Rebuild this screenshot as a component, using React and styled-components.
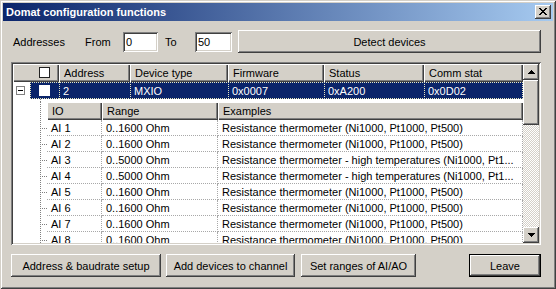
import React from "react";
import styled, { createGlobalStyle } from "styled-components";

const face = "#d4d0c8";
const raised = `inset -1px -1px #404040, inset 1px 1px #fff, inset -2px -2px #808080, inset 2px 2px ${face}`;
const sunken = `inset 1px 1px #808080, inset -1px -1px #fff, inset 2px 2px #404040, inset -2px -2px ${face}`;

const GlobalStyle = createGlobalStyle`
  html, body { margin: 0; padding: 0; background: ${face}; }
  body {
    font-family: "Liberation Sans", Arial, sans-serif;
    font-size: 11px;
    color: #000;
  }
  * { box-sizing: border-box; }
`;

const Window = styled.div`
  width: 556px;
  height: 289px;
  padding: 3px;
  background: ${face};
  box-shadow: inset 1px 1px ${face}, inset -1px -1px #404040, inset 2px 2px #fff,
    inset -2px -2px #808080;
  display: flex;
  flex-direction: column;
`;

const TitleBar = styled.div`
  flex: none;
  height: 18px;
  display: flex;
  align-items: center;
  justify-content: space-between;
  padding: 0 2px 0 3px;
  background: linear-gradient(to right, #0a246a, #a6caf0);
  color: #fff;
  font-weight: bold;
  font-size: 11px;
`;

const CloseButton = styled.div`
  width: 16px;
  height: 14px;
  background: ${face};
  box-shadow: ${raised};
  display: flex;
  align-items: center;
  justify-content: center;
  padding-bottom: 1px;
`;

const Body = styled.div`
  flex: 1;
  display: flex;
  flex-direction: column;
  gap: 9px;
  padding: 9px 12px 9px 8px;
`;

const TopRow = styled.div`
  height: 23px;
  flex: none;
  display: flex;
  align-items: center;
`;

const Label = styled.span`
  width: ${(p) => p.$w}px;
  padding-left: ${(p) => p.$pl || 0}px;
  margin-left: ${(p) => p.$ml || 0}px;
  flex: none;
  white-space: nowrap;
`;

const TextInput = styled.input`
  width: ${(p) => p.$w}px;
  height: 20px;
  flex: none;
  border: none;
  outline: none;
  background: #fff;
  box-shadow: ${sunken};
  font: 11px "Liberation Sans", Arial, sans-serif;
  padding: 1px 3px 0;
`;

const Button = styled.button`
  width: ${(p) => (p.$w ? `${p.$w}px` : "auto")};
  flex: ${(p) => (p.$grow ? 1 : "none")};
  height: ${(p) => p.$h || 23}px;
  margin-left: ${(p) => (p.$auto ? "auto" : `${p.$ml || 0}px`)};
  border: ${(p) => (p.$default ? "1px solid #000" : "none")};
  background: ${face};
  box-shadow: ${raised};
  font: 11px "Liberation Sans", Arial, sans-serif;
  color: #000;
  padding: 0;
  white-space: nowrap;
`;

const Grid = styled.div`
  height: 183px;
  flex: none;
  padding: 2px;
  box-shadow: ${sunken};
  display: flex;
`;

const ListArea = styled.div`
  flex: 1;
  background: #fff;
  overflow: hidden;
  display: flex;
  flex-direction: column;
`;

const HeaderRow = styled.div`
  height: 18px;
  flex: none;
  display: flex;
`;

const HeaderCell = styled.div`
  width: ${(p) => p.$w}px;
  flex: none;
  background: ${face};
  box-shadow: inset 1px 1px #fff, inset -1px -1px #404040, inset -2px -2px #808080;
  padding-left: ${(p) => (p.$pl != null ? p.$pl : 5)}px;
  padding-bottom: 1px;
  display: flex;
  align-items: center;
  white-space: nowrap;
`;

const Check = styled.span`
  width: 11px;
  height: 11px;
  background: #fff;
  border: 1px solid ${(p) => (p.$onDark ? "#fff" : "#222")};
  display: block;
`;

const SelectedRow = styled.div`
  height: 17px;
  flex: none;
  display: flex;
`;

const LeadCell = styled.div`
  width: 17px;
  flex: none;
  padding-left: 3px;
  display: flex;
  align-items: center;
`;

const ExpandBox = styled.span`
  width: 9px;
  height: 9px;
  border: 1px solid #808080;
  display: flex;
  align-items: center;
  justify-content: center;
  &::before {
    content: "";
    width: 5px;
    height: 1px;
    background: #000;
  }
`;

const SelectedBand = styled.div`
  flex: 1;
  display: flex;
  background: #0a246a;
  color: #fff;
  outline: 1px dotted #e8e8c0;
  outline-offset: -1px;
`;

const SelCell = styled.div`
  width: ${(p) => p.$w}px;
  flex: none;
  padding-left: ${(p) => (p.$pl != null ? p.$pl : 3)}px;
  border-left: ${(p) => (p.$first ? "none" : "1px dotted #e8e8c0")};
  display: flex;
  align-items: center;
  white-space: nowrap;
`;

const treeLine = `repeating-linear-gradient(to bottom, #808080 0 1px, transparent 1px 2px) 27px 0 / 1px 100% no-repeat`;
const branchLine = `repeating-linear-gradient(to right, #808080 0 1px, transparent 1px 2px) 27px 50% / 7px 1px no-repeat`;

const Gutter = styled.div`
  width: 34px;
  flex: none;
  background: ${(p) => (p.$branch ? `${branchLine}, ${treeLine}` : treeLine)};
`;

const Spacer = styled.div`
  height: 3px;
  flex: none;
  display: flex;
`;

const NestedRow = styled.div`
  height: 16px;
  flex: none;
  display: flex;
`;

const NestedCell = styled.div`
  width: ${(p) => p.$w}px;
  flex: none;
  padding-left: 4px;
  border-bottom: 1px dotted #a8a8a8;
  border-right: 1px dotted #a8a8a8;
  display: flex;
  align-items: center;
  white-space: nowrap;
  overflow: hidden;
`;

const ScrollBar = styled.div`
  width: 16px;
  flex: none;
  display: flex;
  flex-direction: column;
`;

const ScrollButton = styled.div`
  height: ${(p) => p.$h || 16}px;
  flex: none;
  background: ${face};
  box-shadow: ${raised};
  display: flex;
  align-items: center;
  justify-content: center;
`;

const Track = styled.div`
  flex: 1;
  background: conic-gradient(${face} 25%, #fff 0 50%, ${face} 0 75%, #fff 0) 0 0 / 2px 2px;
`;

const ButtonRow = styled.div`
  height: 23px;
  flex: none;
  display: flex;
`;

const Arrow = ({ down }) => (
  <svg width="7" height="4" viewBox="0 0 7 4" shapeRendering="crispEdges">
    <path
      d="M3 0h1v1h1v1h1v1h1v1H0V3h1V2h1V1h1z"
      fill="#000"
      transform={down ? "rotate(180 3.5 2)" : undefined}
    />
  </svg>
);

const CloseGlyph = () => (
  <svg width="8" height="7" viewBox="0 0 8 7" shapeRendering="crispEdges">
    <path
      fill="#000"
      d="M0 0h2v1H0zM6 0h2v1H6zM1 1h2v1H1zM5 1h2v1H5zM2 2h4v1H2zM3 3h2v1H3zM2 4h4v1H2zM1 5h2v1H1zM5 5h2v1H5zM0 6h2v1H0zM6 6h2v1H6z"
    />
  </svg>
);

const mainCols = [
  { label: "Address", w: 71, value: "2" },
  { label: "Device type", w: 98, value: "MXIO" },
  { label: "Firmware", w: 96, value: "0x0007" },
  { label: "Status", w: 100, value: "0xA200" },
  { label: "Comm stat", w: 99, value: "0x0D02" },
];

const nestedCols = [
  { label: "IO", w: 55 },
  { label: "Range", w: 116 },
  { label: "Examples", w: 305 },
];

const normal = "Resistance thermometer (Ni1000, Pt1000, Pt500)";
const high = "Resistance thermometer - high temperatures (Ni1000, Pt1...";

const ioRows = [
  ["AI 1", "0..1600 Ohm", normal],
  ["AI 2", "0..1600 Ohm", normal],
  ["AI 3", "0..5000 Ohm", high],
  ["AI 4", "0..5000 Ohm", high],
  ["AI 5", "0..1600 Ohm", normal],
  ["AI 6", "0..1600 Ohm", normal],
  ["AI 7", "0..1600 Ohm", normal],
  ["AI 8", "0..1600 Ohm", normal],
];

export default function App() {
  return (
    <>
      <GlobalStyle />
      <Window>
        <TitleBar>
          <span>Domat configuration functions</span>
          <CloseButton>
            <CloseGlyph />
          </CloseButton>
        </TitleBar>
        <Body>
          <TopRow>
            <Label $w={74} $pl={2}>
              Addresses
            </Label>
            <Label $w={38}>From</Label>
            <TextInput $w={35} defaultValue="0" />
            <Label $w={30} $ml={7}>
              To
            </Label>
            <TextInput $w={37} defaultValue="50" />
            <Button $grow $ml={6}>
              Detect devices
            </Button>
          </TopRow>

          <Grid>
            <ListArea>
              <HeaderRow>
                <HeaderCell $w={46} $pl={26}>
                  <Check />
                </HeaderCell>
                {mainCols.map((c) => (
                  <HeaderCell key={c.label} $w={c.w}>
                    {c.label}
                  </HeaderCell>
                ))}
              </HeaderRow>

              <SelectedRow>
                <LeadCell>
                  <ExpandBox />
                </LeadCell>
                <SelectedBand>
                  <SelCell $w={29} $pl={9} $first>
                    <Check $onDark />
                  </SelCell>
                  {mainCols.map((c) => (
                    <SelCell key={c.label} $w={c.w}>
                      {c.value}
                    </SelCell>
                  ))}
                </SelectedBand>
              </SelectedRow>

              <Spacer>
                <Gutter />
              </Spacer>

              <HeaderRow>
                <Gutter />
                {nestedCols.map((c) => (
                  <HeaderCell key={c.label} $w={c.w}>
                    {c.label}
                  </HeaderCell>
                ))}
              </HeaderRow>

              {ioRows.map((r) => (
                <NestedRow key={r[0]}>
                  <Gutter $branch />
                  {nestedCols.map((c, i) => (
                    <NestedCell key={c.label} $w={c.w}>
                      {r[i]}
                    </NestedCell>
                  ))}
                </NestedRow>
              ))}
            </ListArea>

            <ScrollBar>
              <ScrollButton>
                <Arrow />
              </ScrollButton>
              <ScrollButton $h={45} />
              <Track />
              <ScrollButton>
                <Arrow down />
              </ScrollButton>
            </ScrollBar>
          </Grid>

          <ButtonRow>
            <Button $w={150}>Address &amp; baudrate setup</Button>
            <Button $w={129} $ml={5}>
              Add devices to channel
            </Button>
            <Button $w={115} $ml={6}>
              Set ranges of AI/AO
            </Button>
            <Button $w={72} $auto $default>
              Leave
            </Button>
          </ButtonRow>
        </Body>
      </Window>
    </>
  );
}
